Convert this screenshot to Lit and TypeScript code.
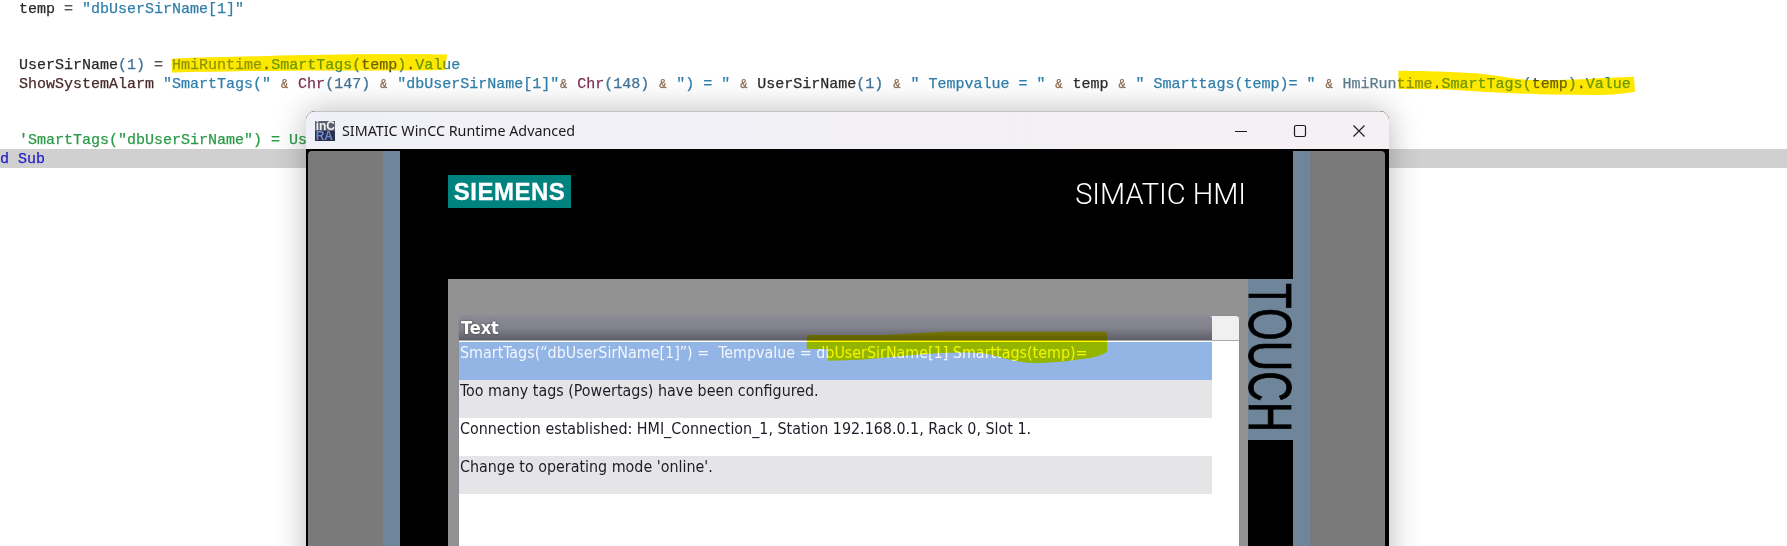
import { LitElement, html, css, svg } from "lit";
import { customElement } from "lit/decorators.js";

const yellowStrokes = svg`
  <path d="M171.5 59 C200 57 240 57 268 56 C320 54 400 54 447 54.5 L445 70 C380 71 320 70 275 71 C240 71 200 72 172 72.5 Z"/>
  <path d="M1398.5 70.7 C1430 71 1460 72 1482.7 74 C1500 76 1515 79 1528.6 80 C1560 81 1600 78 1633.9 76.7 L1635 91.7 C1620 94 1610 95 1597.5 95 L1540 94.3 C1520 93.5 1500 92.5 1482.7 91.7 L1444.4 89.3 L1398.5 89 Z"/>
`;

@customElement("app-root")
export class AppRoot extends LitElement {
  static styles = css`
    :host { display: block; position: relative; width: 1787px; height: 546px; overflow: hidden; background: #fff; }
    .code { margin-top: -1px; font: 15px/21.75px "Liberation Mono", monospace; color: #1c1c1c; filter: blur(0.4px); -webkit-text-stroke: 0.25px currentColor; }
    .line { height: 18.75px; padding-left: 19px; white-space: pre; }
    .cur { background: #d0d0d0; padding-left: 0; color: #2020c8; }
    .v { color: #2a2a2a; } .p { color: #3f7297; } .s { color: #2f7fab; }
    .a { color: #8a6a50; font-size: 12px; display: inline-block; width: 9px; text-align: center; }
    .e { color: #555; } .f { color: #7a3050; } .n { color: #2a7f9f; } .h { color: #5d7d8d; } .d { color: #4a2a2a; }
    .c { color: #2c9a48; }
    .marks { position: absolute; left: 0; top: 0; pointer-events: none; z-index: 3; }
    .mul { mix-blend-mode: multiply; }
    .veil { fill: #ffe800; opacity: 0.3; }
    .win { position: absolute; left: 306px; top: 111px; width: 1083px; height: 480px; box-sizing: border-box; background: #000; border-radius: 9px 9px 0 0; box-shadow: 0 0 32px rgba(0,0,0,.28); display: flex; flex-direction: column; overflow: hidden; z-index: 2; }
    .bar { height: 38px; flex: none; display: flex; align-items: center; padding-left: 9px; background: linear-gradient(90deg, #f0f1f8, #f5f0f3); border-top: 1px solid #c4c4c4; box-sizing: border-box; font: 14.3px "Noto Sans", sans-serif; color: #1a1a1a; }
    .ico { width: 20px; height: 20px; background: #2b3048; overflow: hidden; font: bold 12px/10px "Liberation Sans", sans-serif; margin-right: 7px; flex: none; display: flex; flex-direction: column; }
    .ico div { display: flex; justify-content: flex-end; white-space: nowrap; height: 10px; }
    .ico .t1 { color: #f0f0f0; background: #5c5e70; }
    .ico .t2 { color: #6f8ad0; padding-right: 2px; }
    .title { flex: 1; }
    .ctrl { display: block; margin-right: 45px; flex: none; }
    .ctrl.last { margin-right: 23px; }
    .frame { flex: 1; padding: 2px 4px 0 2px; display: flex; min-height: 0; }
    .inner { flex: 1; display: flex; border-radius: 4px 4px 0 0; overflow: hidden; }
    .side { width: 75px; background: #7a7a7a; flex: none; }
    .steel { width: 17px; background: #6f8599; flex: none; }
    .mid { flex: 1; background: #000; display: flex; flex-direction: column; }
    .brand { height: 128px; flex: none; box-sizing: border-box; padding: 24px 47px 0 48px; display: flex; justify-content: space-between; }
    .logo { width: 123px; height: 33px; background: #00827f; color: #fff; font: bold 24px/33px "Liberation Sans", sans-serif; letter-spacing: 0.5px; text-align: center; -webkit-text-stroke: 0.3px #fff; }
    .hmi { font: 300 29px/38px Roboto, sans-serif; color: #fff; height: 38px; }
    .lower { flex: 1; display: flex; margin-left: 48px; }
    .panel { flex: 1; background: #929292; padding: 36px 8px 0 10px; }
    .list { height: 400px; border: 1px solid #8c8c98; border-radius: 4px 4px 0 0; background: #f0f0f0; box-sizing: border-box; }
    .head { height: 24px; width: 753px; background: linear-gradient(#8a8a94, #82828c 50%, #5e5e68); border-radius: 0 2px 0 0; color: #fff; font: bold 18px/24px "DejaVu Sans Condensed", "DejaVu Sans", sans-serif; font-stretch: condensed; padding-left: 2px; box-sizing: border-box; text-shadow: 0 0 2px #333; }
    .body { background: #fff; height: 375px; border-top: 1px solid #a8a8b0; padding-top: 1px; box-sizing: border-box; }
    .row { width: 753px; height: 38px; box-sizing: border-box; padding-left: 1px; font: 15.9px/22px "DejaVu Sans Condensed", "DejaVu Sans", sans-serif; font-stretch: condensed; color: #1c1c28; white-space: pre; }
    .sel { background: #93b5e5; color: #f2f6fc; }
    .alt { background: #e5e5e7; }
    .strip { width: 45px; flex: none; background: #6f8599; display: flex; flex-direction: column; }
    .touch { height: 161px; flex: none; box-sizing: border-box; display: flex; justify-content: center; padding-top: 4px; }
    .touch span { writing-mode: vertical-rl; font: 62px/45px "Liberation Sans", sans-serif; color: #000; transform-origin: top center; transform: scaleY(0.68); height: 235px; flex: none; -webkit-text-stroke: 0.8px #000; }
    .blk { flex: 1; background: #000; position: relative; }
  `;

  render() {
    return html`
      <div class="code">
        <div class="line"><span class="v">temp</span> <span class="e">=</span> <span class="s">"dbUserSirName[1]"</span></div>
        <div class="line"> </div>
        <div class="line"> </div>
        <div class="line"><span class="v">UserSirName</span><span class="p">(1)</span> <span class="e">=</span> <span class="h">HmiRuntime</span>.<span class="n">SmartTags</span><span class="p">(</span><span class="v">temp</span><span class="p">)</span>.<span class="n">Value</span></div>
        <div class="line"><span class="d">ShowSystemAlarm</span> <span class="s">"SmartTags("</span> <span class="a">&amp;</span> <span class="f">Chr</span><span class="p">(147)</span> <span class="a">&amp;</span> <span class="s">"dbUserSirName[1]"</span><span class="a">&amp;</span> <span class="f">Chr</span><span class="p">(148)</span> <span class="a">&amp;</span> <span class="s">") = "</span> <span class="a">&amp;</span> <span class="v">UserSirName</span><span class="p">(1)</span> <span class="a">&amp;</span> <span class="s">" Tempvalue = "</span> <span class="a">&amp;</span> <span class="v">temp</span> <span class="a">&amp;</span> <span class="s">" Smarttags(temp)= "</span> <span class="a">&amp;</span> <span class="h">HmiRuntime</span>.<span class="n">SmartTags</span><span class="p">(</span><span class="v">temp</span><span class="p">)</span>.<span class="n">Value</span></div>
        <div class="line"> </div>
        <div class="line"> </div>
        <div class="line c">'SmartTags("dbUserSirName") = Us</div>
        <div class="line cur">d Sub</div>
      </div>

      <div class="win">
        <div class="bar">
          <div class="ico"><div class="t1">inC</div><div class="t2">RA</div></div>
          <div class="title">SIMATIC WinCC Runtime Advanced</div>
          <svg class="ctrl" width="14" height="14" viewBox="0 0 14 14"><path d="M1 7.5H13" stroke="#1a1a1a" stroke-width="1.2" fill="none"/></svg>
          <svg class="ctrl" width="14" height="14" viewBox="0 0 14 14"><rect x="1.5" y="1.5" width="11" height="11" rx="1.5" stroke="#1a1a1a" stroke-width="1.2" fill="none"/></svg>
          <svg class="ctrl last" width="14" height="14" viewBox="0 0 14 14"><path d="M1.5 1.5L12.5 12.5M12.5 1.5L1.5 12.5" stroke="#1a1a1a" stroke-width="1.1" fill="none"/></svg>
        </div>
        <div class="frame">
          <div class="inner">
            <div class="side"></div>
            <div class="steel"></div>
            <div class="mid">
              <div class="brand">
                <div class="logo">SIEMENS</div>
                <div class="hmi">SIMATIC HMI</div>
              </div>
              <div class="lower">
                <div class="panel">
                  <div class="list">
                    <div class="head">Text</div>
                    <div class="body">
                      <div class="row sel">SmartTags(“dbUserSirName[1]”) =  Tempvalue = dbUserSirName[1] Smarttags(temp)=</div>
                      <div class="row alt">Too many tags (Powertags) have been configured.</div>
                      <div class="row">Connection established: HMI_Connection_1, Station 192.168.0.1, Rack 0, Slot 1.</div>
                      <div class="row alt">Change to operating mode 'online'.</div>
                    </div>
                  </div>
                </div>
                <div class="strip">
                  <div class="touch"><span>TOUCH</span></div>
                  <div class="blk"></div>
                </div>
              </div>
            </div>
            <div class="steel"></div>
            <div class="side"></div>
          </div>
        </div>
      </div>

      <svg class="marks mul" width="1787" height="546" viewBox="0 0 1787 546">
        <g fill="#ffe800">${yellowStrokes}</g>
        <path fill="#ffff00" d="M806.7 335 L880 335 C900 334.5 925 332.5 946.7 331.7 L1106.7 331.7 L1107.3 351.7 C1102 355 1096 357 1090 358 C1070 361 1050 363 1033 363 C1010 362 995 354 980 353 C955 352 935 353 913 355 C900 356 890 357 880 358 C860 360 845 360.5 828 360.7 L827 349 L806.7 349 Z"/>
      </svg>
      <svg class="marks" width="1787" height="546" viewBox="0 0 1787 546">
        <g class="veil">${yellowStrokes}</g>
      </svg>
    `;
  }
}
